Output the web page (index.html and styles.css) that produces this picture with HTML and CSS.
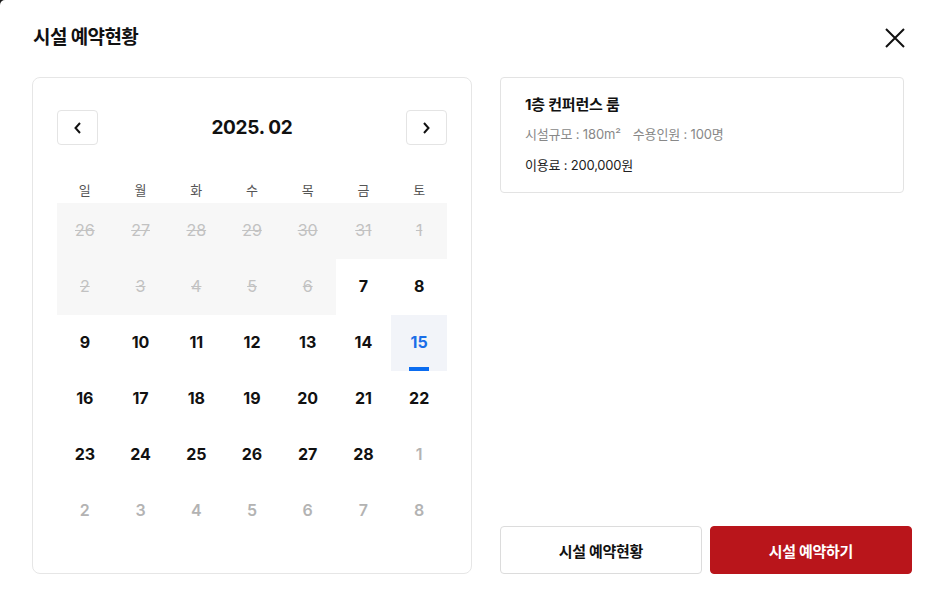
FILE: index.html
```html
<!DOCTYPE html>
<html lang="ko">
<head>
<meta charset="utf-8">
<title>시설 예약현황</title>
<link rel="stylesheet" href="styles.css">
</head>
<body>
<div class="modal">
  <header class="modal-head">
    <h1 class="modal-title">시설 예약현황</h1>
    <button class="close-btn" aria-label="닫기">
      <svg width="20" height="20" viewBox="0 0 20 20"><path d="M1 1 L19 19 M19 1 L1 19" stroke="#111" stroke-width="2" fill="none"/></svg>
    </button>
  </header>
  <div class="modal-body">
    <section class="calendar">
      <div class="cal-head">
        <button class="nav-btn" aria-label="이전 달">
          <svg width="10" height="14" viewBox="0 0 10 14"><path d="M7 2 L2.5 7 L7 12" stroke="#111" stroke-width="2" fill="none"/></svg>
        </button>
        <div class="cal-month">2025. 02</div>
        <button class="nav-btn" aria-label="다음 달">
          <svg width="10" height="14" viewBox="0 0 10 14"><path d="M3 2 L7.5 7 L3 12" stroke="#111" stroke-width="2" fill="none"/></svg>
        </button>
      </div>
      <div class="weekdays">
        <span>일</span><span>월</span><span>화</span><span>수</span><span>목</span><span>금</span><span>토</span>
      </div>
      <div class="days">
        <span class="day past">26</span><span class="day past">27</span><span class="day past">28</span><span class="day past">29</span><span class="day past">30</span><span class="day past">31</span><span class="day past">1</span>
        <span class="day past">2</span><span class="day past">3</span><span class="day past">4</span><span class="day past">5</span><span class="day past">6</span><span class="day">7</span><span class="day">8</span>
        <span class="day">9</span><span class="day">10</span><span class="day">11</span><span class="day">12</span><span class="day">13</span><span class="day">14</span><span class="day selected">15</span>
        <span class="day">16</span><span class="day">17</span><span class="day">18</span><span class="day">19</span><span class="day">20</span><span class="day">21</span><span class="day">22</span>
        <span class="day">23</span><span class="day">24</span><span class="day">25</span><span class="day">26</span><span class="day">27</span><span class="day">28</span><span class="day other">1</span>
        <span class="day other">2</span><span class="day other">3</span><span class="day other">4</span><span class="day other">5</span><span class="day other">6</span><span class="day other">7</span><span class="day other">8</span>
      </div>
    </section>
    <section class="side">
      <div class="room-card">
        <h2 class="room-name">1층 컨퍼런스 룸</h2>
        <p class="room-meta">시설규모 : 180m²<span class="meta-gap">수용인원 : 100명</span></p>
        <p class="room-fee">이용료 : 200,000원</p>
      </div>
      <div class="actions">
        <button class="btn btn-outline">시설 예약현황</button>
        <button class="btn btn-primary">시설 예약하기</button>
      </div>
    </section>
  </div>
</div>
</body>
</html>
```

FILE: styles.css
```css
* { box-sizing: border-box; }
html, body { margin: 0; padding: 0; }
body {
  background: #1b1b1b;
  font-family: "Inter", "Noto Sans CJK KR", sans-serif;
  color: #111;
}
button { font-family: inherit; cursor: pointer; }
.modal {
  width: 942px;
  height: 607px;
  background: #fff;
  border-top-left-radius: 5px;
  padding: 24px 30px 0 32px;
  overflow: hidden;
}
.modal-head {
  display: flex;
  align-items: center;
  justify-content: space-between;
  height: 28px;
  padding-left: 1px;
}
.modal-title {
  margin: 0;
  font-size: 19px;
  font-weight: 700;
  letter-spacing: -0.6px;
  line-height: 28px;
}
.close-btn {
  border: 0;
  background: none;
  padding: 0;
  width: 20px;
  height: 20px;
  margin-right: 7px;
  margin-top: 0;
  display: flex;
}
.modal-body {
  display: flex;
  gap: 28px;
  margin-top: 25px;
}
.calendar {
  width: 440px;
  height: 497px;
  border: 1px solid #e6e6e6;
  border-radius: 8px;
  padding: 32px 24px 0 24px;
}
.cal-head {
  display: flex;
  align-items: center;
  justify-content: space-between;
  height: 35px;
}
.nav-btn {
  width: 41px;
  height: 35px;
  border: 1px solid #e4e4e4;
  border-radius: 4px;
  background: #fff;
  display: flex;
  align-items: center;
  justify-content: center;
  padding: 0;
}
.cal-month {
  font-size: 19px;
  font-weight: 700;
  letter-spacing: -0.3px;
  padding-bottom: 1px;
}
.weekdays {
  display: grid;
  grid-template-columns: repeat(7, 1fr);
  height: 28px;
  margin-top: 30px;
  align-items: center;
  font-size: 13px;
  color: #555;
  text-align: center;
}
.days {
  display: grid;
  grid-template-columns: repeat(7, 1fr);
  grid-auto-rows: 56px;
}
.day {
  position: relative;
  display: flex;
  align-items: center;
  justify-content: center;
  padding-bottom: 2px;
  font-size: 16px;
  font-weight: 700;
  color: #111;
}
.day.past {
  background: #f7f7f7;
  color: #c2c2c2;
  font-weight: 400;
  text-decoration: line-through;
}
.day.other {
  color: #b3b3b3;
  font-weight: 600;
}
.day.selected {
  background: #f2f4f9;
  color: #1a6ee8;
}
.day.selected::after {
  content: "";
  position: absolute;
  left: 50%;
  bottom: 0;
  width: 20px;
  height: 4px;
  margin-left: -10px;
  background: #0b6cf0;
}
.side {
  width: 412px;
  height: 497px;
  display: flex;
  flex-direction: column;
  justify-content: space-between;
}
.room-card {
  width: 404px;
  border: 1px solid #e3e3e3;
  border-radius: 4px;
  padding: 16px 24px 17px 24px;
}
.room-name {
  margin: 0;
  font-size: 15px;
  font-weight: 700;
  line-height: 22px;
  letter-spacing: -0.2px;
}
.room-meta {
  margin: 8px 0 0;
  font-size: 13px;
  line-height: 20px;
  color: #888;
  letter-spacing: -0.15px;
}
.meta-gap { margin-left: 12px; }
.room-fee {
  margin: 11px 0 0;
  font-size: 13px;
  line-height: 20px;
  color: #222;
  letter-spacing: -0.2px;
}
.actions {
  display: flex;
  gap: 8px;
}
.btn {
  flex: 1;
  height: 48px;
  border-radius: 4px;
  font-size: 15px;
  font-weight: 700;
  letter-spacing: -0.3px;
}
.btn-outline {
  background: #fff;
  border: 1px solid #dcdcdc;
  color: #111;
}
.btn-primary {
  background: #b9151b;
  border: 1px solid #b9151b;
  color: #fff;
}
```
